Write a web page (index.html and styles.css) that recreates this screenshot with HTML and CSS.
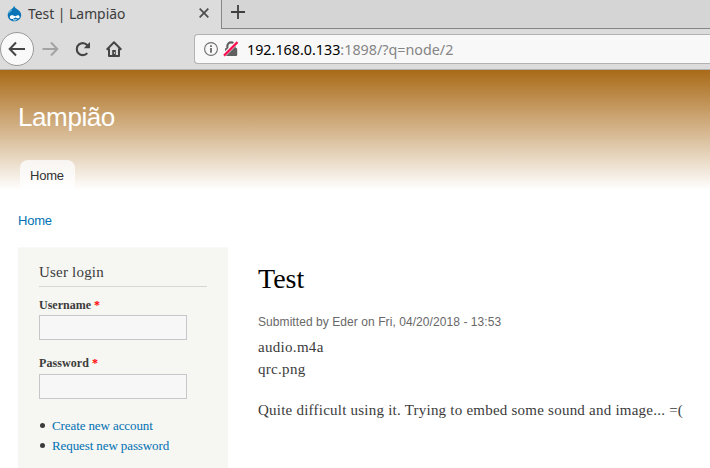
FILE: index.html
```html
<!DOCTYPE html>
<html lang="en">
<head>
<meta charset="utf-8">
<title>Test | Lampião</title>
<link rel="stylesheet" href="styles.css">
</head>
<body>
<div class="browser">
  <div class="tabs">
    <div class="tab">
      <svg class="favicon" width="15" height="17" viewBox="0 0 15 17">
        <path d="M7 0.5C7.5 2.8 9.6 3.8 11.2 5C13 6.3 14.2 8 14.2 10C14.2 13.8 11 16.3 7.3 16.3C3.5 16.3.7 13.6.7 10C.7 7.8 1.9 6 3.6 4.8C5.5 3.4 6.8 2.8 7 .5Z" fill="#0873b6"/>
        <path d="M1.4 8.3C2 6.6 3.4 5.7 4.7 4.9" stroke="#65b4df" stroke-width="1.3" fill="none"/>
        <path d="M2.8 12.3C2.8 10.3 4.8 9.9 6.4 10.6C7.6 11.1 8.3 11.6 9 11C10.5 9.8 12.6 10 12.6 12C12.6 13.6 10.5 13.6 9.2 12.7C8.2 12 7.5 13.5 5.6 13.9C4 14.2 2.8 13.7 2.8 12.3Z" fill="#fff"/>
        <path d="M6.2 14.7Q8 15.5 9.5 14.5" stroke="#fff" fill="none"/>
      </svg>
      <span class="tab-title">Test | Lampião</span>
      <svg class="close" width="12" height="12" viewBox="0 0 12 12"><path d="M1.7 1.7L10.3 10.3M10.3 1.7L1.7 10.3" stroke="#4c4c4c" stroke-width="1.7"/></svg>
    </div>
    <div class="tab-strip">
      <svg width="14" height="14" viewBox="0 0 14 14"><path d="M7 0V14M0 7H14" stroke="#3f3f3f" stroke-width="1.8"/></svg>
    </div>
  </div>
  <div class="toolbar">
    <div class="back"><svg width="18" height="16" viewBox="0 0 18 16"><path d="M17 8H2M8 1.5L1.7 8L8 14.5" fill="none" stroke="#454545" stroke-width="2"/></svg></div>
    <svg class="forward" width="17" height="16" viewBox="0 0 17 16"><path d="M.5 8H15M9 1.5L15.3 8L9 14.5" fill="none" stroke="#a3a3a3" stroke-width="2"/></svg>
    <svg class="reload" width="16" height="16" viewBox="0 0 16 16"><path d="M12.3 12.1A6 6 0 1 1 12.8 4.8" fill="none" stroke="#454545" stroke-width="2.1"/><path d="M15 1V7.2H8.8L11.2 4.8L12.4 3.6Z" fill="#454545"/></svg>
    <svg class="home" width="16" height="16" viewBox="0 0 16 16"><path d="M.6 8.7L8 1.3L15.4 8.7M3 7.5V15H13V7.5" fill="none" stroke="#454545" stroke-width="2" stroke-linejoin="round"/><path d="M6.2 14.5V9H9.8V14.5Z" fill="#454545"/><path d="M8.4 11V12.8" stroke="#dcdcdc"/></svg>
    <div class="address">
      <svg width="14" height="14" viewBox="0 0 14 14"><circle cx="7" cy="7" r="6.4" fill="none" stroke="#707070" stroke-width="1.1"/><path d="M7 6V10.7M7 3.2V4.9" stroke="#555" stroke-width="1.6"/></svg>
      <svg class="lock" width="16" height="16" viewBox="0 0 16 16"><path d="M4.4 8V5A3.6 3.6 0 0 1 11.6 5V8" fill="none" stroke="#606060" stroke-width="2.2"/><rect x="2" y="7" width="12.2" height="8" rx="1" fill="#606060"/><path d="M.8 14.4L14.3 .9" stroke="#f8f8f8" stroke-width="4"/><path d="M1 14.6L14.5 1.1" stroke="#fb0f50" stroke-width="2.2"/></svg>
      <span class="url"><span class="host">192.168.0.133</span><span class="path">:1898/?q=node/2</span></span>
    </div>
  </div>
</div>
<header>
  <div class="site-name">Lampião</div>
  <nav><a class="menu-tab">Home</a></nav>
</header>
<div class="breadcrumb"><a>Home</a></div>
<div class="columns">
  <aside>
    <h2>User login</h2>
    <form>
      <label for="user">Username <b>*</b></label>
      <input id="user" type="text">
      <label for="pass">Password <b>*</b></label>
      <input id="pass" type="password">
    </form>
    <ul>
      <li><a>Create new account</a></li>
      <li><a>Request new password</a></li>
    </ul>
  </aside>
  <main>
    <h1>Test</h1>
    <div class="submitted">Submitted by Eder on Fri, 04/20/2018 - 13:53</div>
    <p>audio.m4a<br>qrc.png</p>
    <p class="story">Quite difficult using it. Trying to embed some sound and image... =(</p>
  </main>
</div>
</body>
</html>
```
FILE: styles.css
```css
* { box-sizing: border-box; }
body {
  margin: 0;
  height: 468px;
  overflow: hidden;
  background: #fff;
  color: #3b3b3b;
  font-family: "Liberation Serif", serif;
}
svg { display: block; flex: none; }
.browser {
  height: 70px;
  background: #dcdcdc;
  border-bottom: 1px solid #b0b0b0;
  font-family: "Noto Sans", sans-serif;
}
.tabs { display: flex; height: 29px; }
.tab { display: flex; width: 221px; padding-left: 7px; }
.favicon { margin-top: 5px; }
.tab-title {
  flex: none;
  width: 170px;
  margin-left: 6px;
  font-size: 15px;
  line-height: 26px;
  white-space: nowrap;
  transform: scaleX(.925);
  transform-origin: left;
}
.close { margin-top: 7px; }
.tab-strip {
  flex: 1;
  padding: 5px 0 0 9px;
  background: #d5d5d5;
  border-left: 1px solid #858585;
  border-bottom: 1px solid #858585;
}
.toolbar { display: flex; align-items: center; height: 40px; }
.back {
  display: flex;
  align-items: center;
  justify-content: center;
  width: 34px;
  height: 34px;
  border: 1px solid #999;
  border-radius: 50%;
  background: #f9f9f9;
}
.forward { margin-left: 8px; }
.reload { margin-left: 16px; }
.home { margin-left: 15px; }
.address {
  display: flex;
  align-items: center;
  flex: 1;
  height: 30px;
  margin-left: 72px;
  padding-left: 9px;
  background: #f8f8f8;
  border: 1px solid #b2b2b2;
  border-right: 0;
  border-radius: 4px 0 0 4px;
}
.lock { margin-left: 5px; }
.url {
  margin-left: 8px;
  font-size: 15px;
  white-space: nowrap;
  transform: scaleX(.954);
  transform-origin: left;
}
.host { color: #000; }
.path { color: #858585; }
header {
  height: 120px;
  padding: 32px 0 0 18px;
  background: linear-gradient(#a96a17, #fff);
  font-family: "Liberation Sans", sans-serif;
}
.site-name { height: 58px; color: #fff; font-size: 26px; line-height: 30px; letter-spacing: -.4px; }
nav { display: flex; padding-left: 2px; }
.menu-tab {
  width: 55px;
  height: 30px;
  padding-left: 10px;
  border-radius: 8px 8px 0 0;
  background: linear-gradient(#f8f5f1, #fff);
  color: #333;
  font-size: 13px;
  line-height: 31px;
  letter-spacing: -.2px;
}
.breadcrumb {
  height: 57px;
  padding: 21px 0 0 18px;
  color: #0071b3;
  font: 13px/20px "Liberation Sans", sans-serif;
  letter-spacing: -.2px;
}
.columns { display: flex; padding-left: 18px; }
aside {
  width: 210px;
  height: 230px;
  padding: 15px 21px;
  background: #f6f6f2;
  border: 1px solid #f9f9f9;
  border-width: 1px 0;
}
h2 {
  height: 24px;
  margin: 0 0 9px;
  border-bottom: 1px solid #d6d6d6;
  font-size: 15px;
  font-weight: normal;
  line-height: 19px;
  letter-spacing: .2px;
}
form { display: flex; flex-direction: column; align-items: flex-start; }
label { height: 19px; font-size: 12px; font-weight: bold; line-height: 18px; }
label b { color: #f00; }
input {
  width: 148px;
  height: 25px;
  margin: 0 0 14px;
  border: 1px solid #c6c7c8;
  background: #f7f7f7;
}
input + label { height: 20px; letter-spacing: .08px; }
ul { margin: 3px 0 0; padding: 0; list-style: none; }
li { display: flex; align-items: center; font-size: 13px; line-height: 20px; letter-spacing: -.1px; }
li::before { content: ""; width: 5px; height: 5px; margin: -1px 7px 0 1px; border-radius: 50%; background: #3b3b3b; }
aside a { color: #0071b3; }
main { padding: 14px 0 0 30px; white-space: nowrap; }
h1 { margin: 0; height: 51px; color: #000; font-size: 28px; font-weight: normal; line-height: 36px; }
.submitted { margin-bottom: 4px; color: #686868; font: 12px/20px "Liberation Sans", sans-serif; letter-spacing: .07px; }
p { margin: 0 0 19px; font-size: 15px; line-height: 22px; letter-spacing: .3px; }
.story { letter-spacing: .23px; }
```
